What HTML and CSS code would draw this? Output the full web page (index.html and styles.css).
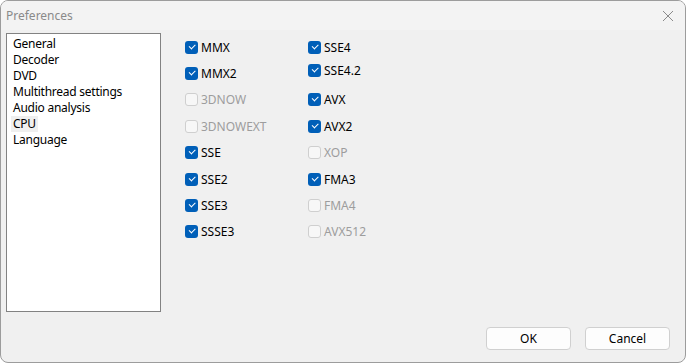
FILE: index.html
```html
<!DOCTYPE html>
<html>
<head>
<meta charset="utf-8">
<link rel="stylesheet" href="styles.css">
</head>
<body>
<div class="window">
  <div class="titlebar">
    <span class="title">Preferences</span>
    <span class="close"><svg width="12" height="12" viewBox="0 0 12 12"><path d="M1 1 L11 11 M11 1 L1 11" stroke="#8a8a8a" stroke-width="1" fill="none"/></svg></span>
  </div>
  <div class="content">
    <div class="list">
      <div class="item">General</div>
      <div class="item">Decoder</div>
      <div class="item">DVD</div>
      <div class="item">Multithread settings</div>
      <div class="item">Audio analysis</div>
      <div class="item"><span class="sel">CPU</span></div>
      <div class="item">Language</div>
    </div>
    <div class="checks">
      <div class="col">
        <label class="cb on"><span class="box"></span>MMX</label>
        <label class="cb on"><span class="box"></span>MMX2</label>
        <label class="cb off"><span class="box"></span>3DNOW</label>
        <label class="cb off"><span class="box"></span>3DNOWEXT</label>
        <label class="cb on"><span class="box"></span>SSE</label>
        <label class="cb on"><span class="box"></span>SSE2</label>
        <label class="cb on"><span class="box"></span>SSE3</label>
        <label class="cb on"><span class="box"></span>SSSE3</label>
      </div>
      <div class="col">
        <label class="cb on"><span class="box"></span>SSE4</label>
        <label class="cb on raised"><span class="box"></span>SSE4.2</label>
        <label class="cb on"><span class="box"></span>AVX</label>
        <label class="cb on"><span class="box"></span>AVX2</label>
        <label class="cb off"><span class="box"></span>XOP</label>
        <label class="cb on"><span class="box"></span>FMA3</label>
        <label class="cb off"><span class="box"></span>FMA4</label>
        <label class="cb off"><span class="box"></span>AVX512</label>
      </div>
    </div>
  </div>
  <div class="footer">
    <button class="btn">OK</button>
    <button class="btn">Cancel</button>
  </div>
</div>
</body>
</html>
```
FILE: styles.css
```css
html, body {
  margin: 0;
  padding: 0;
  background: #ffffff;
}
body {
  font-family: "Noto Sans", "Open Sans", sans-serif;
  font-size: 12px;
  color: #000;
}
.window {
  box-sizing: border-box;
  width: 686px;
  height: 363px;
  border: 1px solid #9c9c9c;
  border-radius: 8px;
  background: #f0f0f0;
  display: flex;
  flex-direction: column;
  overflow: hidden;
}
.titlebar {
  height: 29px;
  display: flex;
  align-items: center;
  justify-content: space-between;
  padding: 0 11px 0 5px;
  background: #f3f3f3;
  flex: none;
}
.title {
  color: #8a8a8a;
  font-size: 12px;
  line-height: 16px;
}
.close {
  display: flex;
  width: 12px;
  height: 12px;
}
.content {
  display: flex;
  padding: 3px 0 0 5px;
  height: 279px;
  flex: none;
}
.list {
  box-sizing: border-box;
  width: 155px;
  height: 279px;
  border: 1px solid #828282;
  background: #fff;
  padding: 2px 0 0 4px;
  letter-spacing: -0.25px;
}
.item {
  height: 16px;
  line-height: 16px;
  padding-left: 2px;
  white-space: nowrap;
}
.sel {
  display: inline-block;
  background: #efefef;
  padding: 0 2px;
  margin-left: -2px;
}
.checks {
  display: flex;
  padding: 1px 0 0 24px;
}
.col {
  display: flex;
  flex-direction: column;
}
.col:first-child {
  width: 123px;
}
.cb {
  display: flex;
  align-items: center;
  height: 26.4px;
  gap: 3px;
  white-space: nowrap;
}
.cb.raised {
  margin-top: -3px;
  margin-bottom: 3px;
}
.box {
  box-sizing: border-box;
  width: 13px;
  height: 13px;
  border-radius: 3px;
  flex: none;
  position: relative;
}
.on .box {
  background: #005fb8;
}
.on .box::after {
  content: "";
  position: absolute;
  left: 3.5px;
  top: 3px;
  width: 5px;
  height: 2.5px;
  border-left: 1px solid #fff;
  border-bottom: 1px solid #fff;
  transform: rotate(-45deg);
}
.off .box {
  background: #f7f7f7;
  border: 1px solid #cfcfcf;
}
.off {
  color: #9d9d9d;
}
.footer {
  flex: 1;
  display: flex;
  justify-content: flex-end;
  align-items: flex-end;
  gap: 14px;
  padding: 0 15px 12px 0;
}
.btn {
  box-sizing: border-box;
  width: 85px;
  height: 23px;
  border: 1px solid #d0d0d0;
  border-radius: 4px;
  background: #fdfdfd;
  font-family: "Noto Sans", "Open Sans", sans-serif;
  font-size: 12px;
  color: #000;
  padding: 0;
}
```
